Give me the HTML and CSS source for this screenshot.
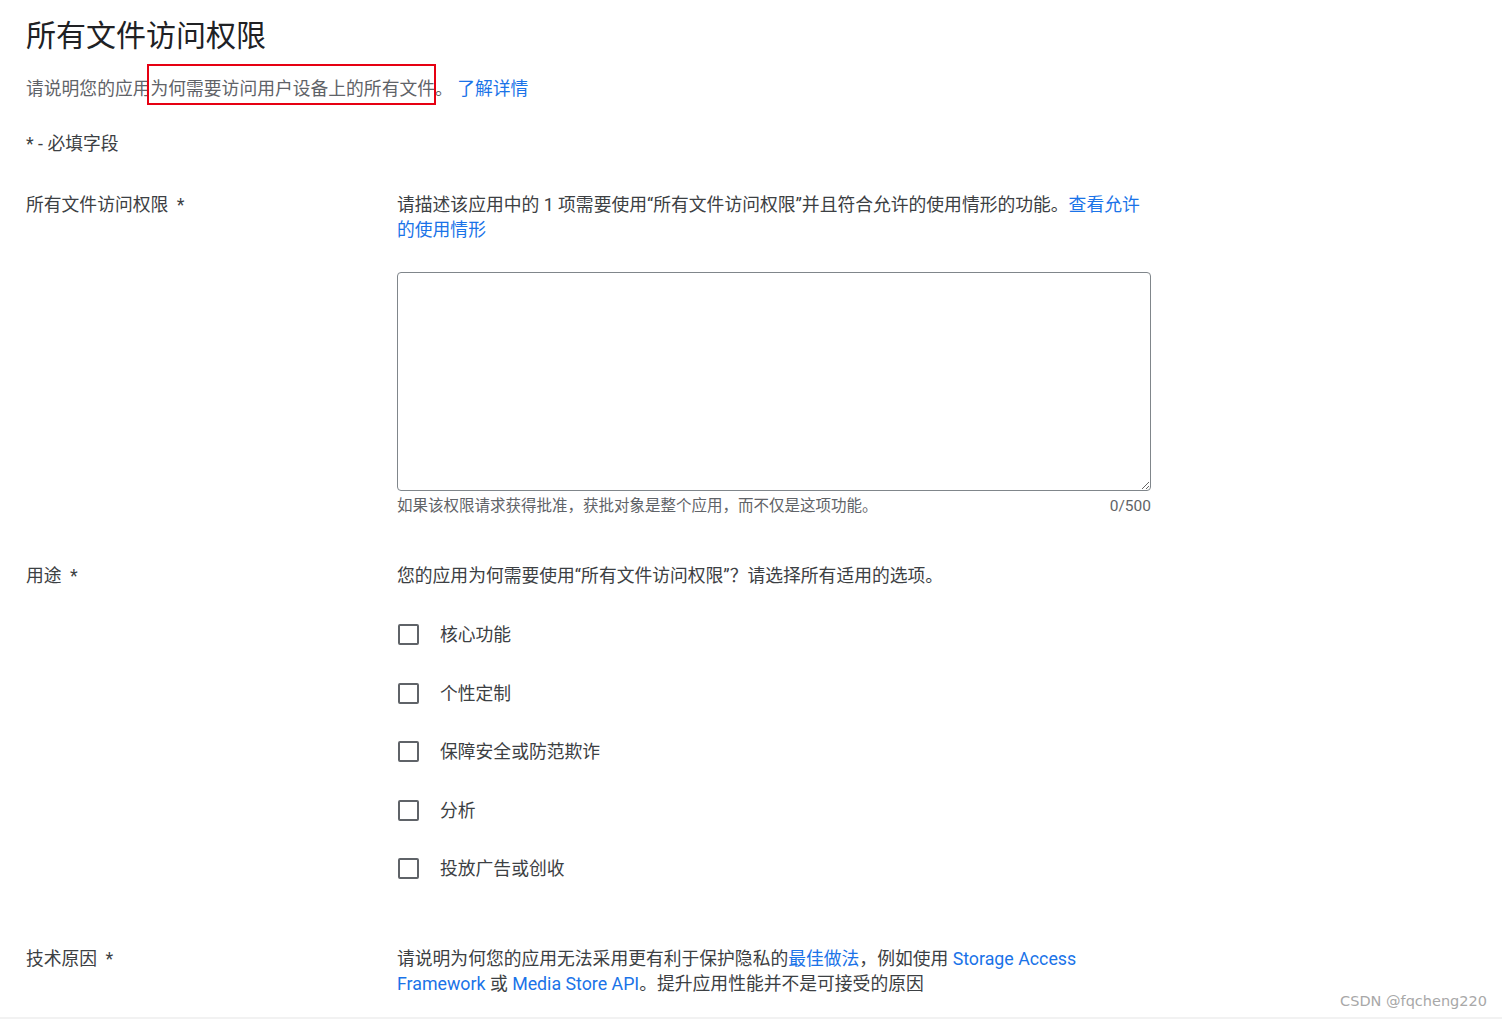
FILE: index.html
```html
<!DOCTYPE html>
<html lang="zh-CN">
<head>
<meta charset="utf-8">
<title>所有文件访问权限</title>
<link rel="stylesheet" href="styles.css">
</head>
<body>
<div class="page">
  <h1 class="title">所有文件访问权限</h1>
  <p class="subtitle">请说明您的应用<span class="marked">为何需要访问用户设备上的所有文件</span>。 <a href="#" class="link">了解详情</a></p>
  <p class="required-note">* - 必填字段</p>

  <section class="row row-first">
    <div class="label">所有文件访问权限 <span class="req">*</span></div>
    <div class="content">
      <p class="desc">请描述该应用中的 1 项需要使用“所有文件访问权限”并且符合允许的使用情形的功能。<a href="#" class="link">查看允许的使用情形</a></p>
      <textarea class="field"></textarea>
      <div class="helper">
        <span>如果该权限请求获得批准，获批对象是整个应用，而不仅是这项功能。</span>
        <span>0/500</span>
      </div>
    </div>
  </section>

  <section class="row row-second">
    <div class="label">用途 <span class="req">*</span></div>
    <div class="content">
      <p class="desc">您的应用为何需要使用“所有文件访问权限”？请选择所有适用的选项。</p>
      <ul class="options">
        <li class="option"><span class="box"></span><span class="opt-text">核心功能</span></li>
        <li class="option"><span class="box"></span><span class="opt-text">个性定制</span></li>
        <li class="option"><span class="box"></span><span class="opt-text">保障安全或防范欺诈</span></li>
        <li class="option"><span class="box"></span><span class="opt-text">分析</span></li>
        <li class="option"><span class="box"></span><span class="opt-text">投放广告或创收</span></li>
      </ul>
    </div>
  </section>

  <section class="row row-third">
    <div class="label">技术原因 <span class="req">*</span></div>
    <div class="content">
      <p class="desc">请说明为何您的应用无法采用更有利于保护隐私的<a href="#" class="link">最佳做法</a>，例如使用 <a href="#" class="link">Storage Access Framework</a> 或 <a href="#" class="link">Media Store API</a>。提升应用性能并不是可接受的原因</p>
    </div>
  </section>

  <div class="watermark">CSDN @fqcheng220</div>
</div>
</body>
</html>
```

FILE: styles.css
```css
html, body {
  margin: 0;
  padding: 0;
  background: #ffffff;
}

body {
  font-family: Roboto, "Noto Sans CJK SC", sans-serif;
  color: #3c4043;
  font-size: 17.8px;
  line-height: 25px;
}

.page {
  position: relative;
  box-sizing: border-box;
  height: 1019px;
  padding: 16px 0 0 26px;
  border-bottom: 2px solid #f2f2f2;
  overflow: hidden;
}

.title {
  margin: 0;
  font-size: 30px;
  line-height: 40px;
  font-weight: 400;
  color: #202124;
}

.subtitle {
  margin: 19.5px 0 0;
  color: #5f6368;
}

.marked {
  position: relative;
  display: inline-block;
}

.marked::after {
  content: "";
  position: absolute;
  left: -3px;
  right: -1px;
  top: -12px;
  bottom: -4px;
  border: 2px solid #e60012;
}

.link {
  color: #1a73e8;
  text-decoration: none;
}

.required-note {
  margin: 30px 0 0;
  color: #3c4043;
}

.row {
  display: grid;
  grid-template-columns: 371px 754px;
}

.row-first { margin-top: 36px; }
.row-second { margin-top: 46.5px; }
.row-third { margin-top: 48px; }

.label {
  color: #3c4043;
}

.req {
  margin-left: 4px;
}

.desc {
  margin: 0;
}

.field {
  display: block;
  box-sizing: border-box;
  width: 754px;
  height: 219px;
  margin-top: 30.5px;
  border: 1px solid #80868b;
  border-radius: 4px;
  padding: 8px;
  font: inherit;
  resize: vertical;
  background: #fff;
}

.helper {
  display: flex;
  justify-content: space-between;
  margin-top: 5px;
  font-size: 15.5px;
  line-height: 20px;
  color: #5f6368;
}

.options {
  list-style: none;
  margin: 18px 0 0;
  padding: 0;
}

.option {
  display: flex;
  align-items: center;
  height: 58.5px;
}

.box {
  box-sizing: border-box;
  width: 21px;
  height: 21px;
  margin-left: 1px;
  border: 2px solid #5f6368;
  border-radius: 2px;
}

.opt-text {
  margin-left: 21px;
  color: #3c4043;
}

.watermark {
  position: absolute;
  right: 15px;
  bottom: 6px;
  font-family: "DejaVu Sans", sans-serif;
  font-size: 14.5px;
  line-height: 20px;
  color: #a8a8a8;
}
```
